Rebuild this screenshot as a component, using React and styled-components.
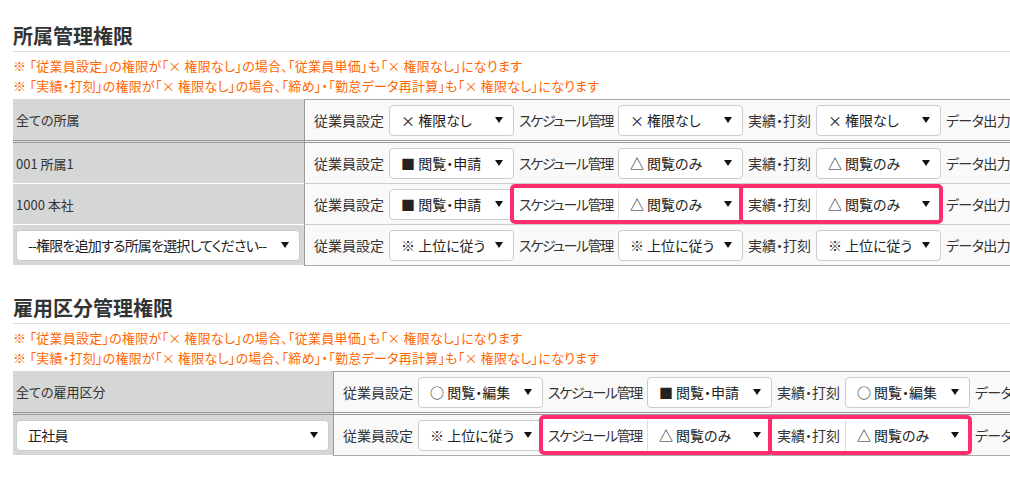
import React from "react";
import styled, { createGlobalStyle, css } from "styled-components";

const GlobalStyle = createGlobalStyle`
  body {
    margin: 0;
    background: #fff;
    overflow: hidden;
    font-family: "Noto Sans CJK JP", "Noto Sans", sans-serif;
    color: #333;
  }
`;

const Page = styled.div`
  padding: 24px 0 0 13px;
  white-space: nowrap;
`;

const Section = styled.section`
  & + & {
    margin-top: 30px;
  }
`;

const Title = styled.h2`
  margin: 0;
  padding-bottom: 3px;
  font-size: 20px;
  line-height: 24px;
  font-weight: bold;
  color: #333;
  border-bottom: 1px solid #ddd;
`;

const Notes = styled.ul`
  list-style: none;
  margin: 4px 0 3px;
  padding: 0;
  font-size: 13px;
  line-height: 20px;
  letter-spacing: 0.25px;
  color: #ff6600;
  font-feature-settings: "palt";
`;

const Table = styled.div`
  width: max-content;
`;

const Row = styled.div`
  display: flex;
`;

const Head = styled.div`
  width: ${p => p.$w}px;
  flex-shrink: 0;
  box-sizing: border-box;
  display: flex;
  align-items: center;
  padding: 0 4px 0 3px;
  background: #d5d6d6;
  font-size: 13px;
  font-feature-settings: "palt";
  border-bottom: ${p => (p.$first ? "3px double #999" : "1px solid #fff")};
`;

const Cell = styled.div`
  display: flex;
  align-items: stretch;
  height: 40px;
  padding-left: 4px;
  background: #f9f9f9;
  border-left: 1px solid #999;
  ${p =>
    p.$first
      ? css`
          border-top: 1px solid #aaa;
          border-bottom: 3px double #999;
        `
      : css`
          border-bottom: 1px solid ${p.$last ? "#aaa" : "#ccc"};
        `}
`;

const Group = styled.div`
  position: relative;
  display: flex;
  align-items: center;
  gap: 5px;
  padding-left: 5px;
  ${p =>
    p.$hl &&
    css`
      background: #fff;
      &::after {
        content: "";
        position: absolute;
        top: 0;
        bottom: 0;
        left: -4px;
        right: -2px;
        border: 4px solid #ff2d6d;
        border-radius: 5px;
        pointer-events: none;
      }
    `}
`;

const Label = styled.span`
  font-size: 14px;
  letter-spacing: ${p => p.$ls || 0}px;
  font-feature-settings: "palt";
  color: #333;
`;

const Select = styled.div`
  box-sizing: border-box;
  width: ${p => (p.$full ? "100%" : "125px")};
  height: 31px;
  display: flex;
  align-items: center;
  justify-content: space-between;
  padding: 0 10px 0 11px;
  background: #fff;
  border: 1px solid #ccc;
  border-radius: 4px;
  font-size: 14px;
  color: #222;
  font-feature-settings: "palt";
  ${p =>
    p.$flat &&
    css`
      border-color: transparent;
      border-left-color: #ddd;
      border-radius: 0;
    `}
`;

const Value = styled.span`
  letter-spacing: ${p => p.$ls || 0}px;
`;

const Arrow = styled.span`
  flex-shrink: 0;
  width: 0;
  height: 0;
  border-left: 4.5px solid transparent;
  border-right: 4.5px solid transparent;
  border-top: 6px solid #111;
`;

const labels = [
  { text: "従業員設定" },
  { text: "スケジュール管理", ls: -1.4 },
  { text: "実績・打刻" },
  { text: "データ出力", ls: -0.6 },
];

const notes = [
  "※ 「従業員設定」の権限が「× 権限なし」の場合、「従業員単価」も「× 権限なし」になります",
  "※ 「実績・打刻」の権限が「× 権限なし」の場合、「締め」・「勤怠データ再計算」も「× 権限なし」になります",
];

const NONE = "× 権限なし";
const APPLY = "■ 閲覧・申請";
const VIEW = "△ 閲覧のみ";
const EDIT = "○ 閲覧・編集";
const INHERIT = "※ 上位に従う";

const sections = [
  {
    title: "所属管理権限",
    headW: 291,
    rows: [
      { name: "全ての所属", values: [NONE, NONE, NONE, NONE] },
      { name: "001 所属1", values: [APPLY, VIEW, VIEW, VIEW] },
      { name: "1000 本社", values: [APPLY, VIEW, VIEW, VIEW], hl: [1, 2] },
      { picker: "--権限を追加する所属を選択してください--", values: [INHERIT, INHERIT, INHERIT, INHERIT] },
    ],
  },
  {
    title: "雇用区分管理権限",
    headW: 320,
    rows: [
      { name: "全ての雇用区分", values: [EDIT, APPLY, EDIT, EDIT] },
      { picker: "正社員", values: [INHERIT, VIEW, VIEW, VIEW], hl: [1, 2] },
    ],
  },
];

function Dropdown({ value, full, flat, ls }) {
  return (
    <Select $full={full} $flat={flat}>
      <Value $ls={ls}>{value}</Value>
      <Arrow />
    </Select>
  );
}

export default function App() {
  return (
    <Page>
      <GlobalStyle />
      {sections.map(sec => (
        <Section key={sec.title}>
          <Title>{sec.title}</Title>
          <Notes>
            {notes.map(n => (
              <li key={n}>{n}</li>
            ))}
          </Notes>
          <Table>
            {sec.rows.map((row, i) => {
              const first = i === 0;
              const last = i === sec.rows.length - 1;
              const hl = row.hl || [];
              return (
                <Row key={i}>
                  <Head $w={sec.headW} $first={first}>
                    {row.picker ? <Dropdown value={row.picker} full ls={-0.8} /> : row.name}
                  </Head>
                  <Cell $first={first} $last={last}>
                    {labels.map((label, j) => (
                      <Group key={label.text} $hl={hl.includes(j)}>
                        <Label $ls={label.ls}>{label.text}</Label>
                        <Dropdown value={row.values[j]} flat={hl.includes(j)} />
                      </Group>
                    ))}
                  </Cell>
                </Row>
              );
            })}
          </Table>
        </Section>
      ))}
    </Page>
  );
}
